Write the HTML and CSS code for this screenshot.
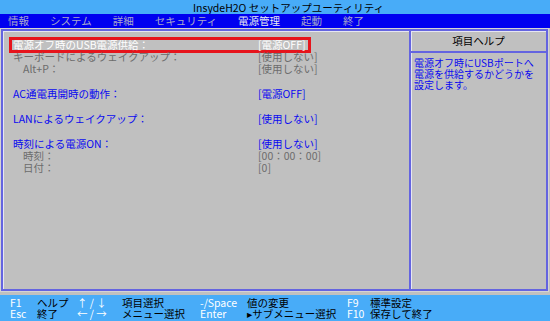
FILE: index.html
```html
<!DOCTYPE html>
<html lang="ja">
<head>
<meta charset="utf-8">
<link rel="stylesheet" href="styles.css">
</head>
<body>
<div class="screen">
  <div class="title">InsydeH2O セットアップユーティリティ</div>
  <div class="menu">
    <span class="mi">情報</span>
    <span class="mi">システム</span>
    <span class="mi">詳細</span>
    <span class="mi">セキュリティ</span>
    <span class="mi active">電源管理</span>
    <span class="mi">起動</span>
    <span class="mi">終了</span>
  </div>
  <div class="main">
    <div class="frame">
      <div class="items">
        <div class="row sel"><span class="lab">電源オフ時のUSB電源供給：</span><span class="val">[電源OFF]</span></div>
        <div class="row dim"><span class="lab">キーボードによるウェイクアップ：</span><span class="val">[使用しない]</span></div>
        <div class="row dim"><span class="lab sub">Alt+P：</span><span class="val">[使用しない]</span></div>
        <div class="row gap"></div>
        <div class="row act"><span class="lab">AC通電再開時の動作：</span><span class="val">[電源OFF]</span></div>
        <div class="row gap"></div>
        <div class="row act"><span class="lab">LANによるウェイクアップ：</span><span class="val">[使用しない]</span></div>
        <div class="row gap"></div>
        <div class="row act"><span class="lab">時刻による電源ON：</span><span class="val">[使用しない]</span></div>
        <div class="row dim"><span class="lab sub">時刻：</span><span class="val">[00：00：00]</span></div>
        <div class="row dim"><span class="lab sub">日付：</span><span class="val">[0]</span></div>
      </div>
      <div class="help">
        <div class="help-head">項目ヘルプ</div>
        <div class="help-body">電源オフ時にUSBポートへ<br>電源を供給するかどうかを<br>設定します。</div>
      </div>
    </div>
  </div>
  <div class="footer">
    <span class="k">F1</span><span class="d">ヘルプ</span><span class="k">↑ / ↓</span><span class="d">項目選択</span><span class="k">-/Space</span><span class="d">値の変更</span><span class="k">F9</span><span class="d">標準設定</span>
    <span class="k">Esc</span><span class="d">終了</span><span class="k">← / →</span><span class="d">メニュー選択</span><span class="k">Enter</span><span class="d">▸サブメニュー選択</span><span class="k">F10</span><span class="d">保存して終了</span>
  </div>
</div>
</body>
</html>
```
FILE: styles.css
```css
html, body {
  margin: 0;
  padding: 0;
  background: #c0c0c0;
}
.screen {
  width: 550px;
  height: 321px;
  display: flex;
  flex-direction: column;
  font-family: "Noto Sans CJK JP", "DejaVu Sans", sans-serif;
  font-size: 10.5px;
  overflow: hidden;
}
.title {
  height: 14px;
  line-height: 15px;
  background: #48acf8;
  color: #000;
  padding-left: 193px;
  white-space: nowrap;
}
.menu {
  height: 14px;
  line-height: 14px;
  background: #0000f0;
  display: flex;
  gap: 21px;
  padding-left: 8px;
  color: #a8a8c8;
  white-space: nowrap;
}
.mi.active {
  color: #e8e8f0;
}
.main {
  flex: 1;
  background: #c0c0c0;
  padding: 1px 2px 4px 1px;
  display: flex;
}
.frame {
  flex: 1;
  border: 2px solid #6464e0;
  box-shadow: inset 1px 1px 0 #e6e6f2, 0 0 0 1px #d4d4d4;
  display: grid;
  grid-template-columns: 1fr 137px;
}
.items {
  padding: 7.5px 0 0 8px;
}
.row {
  width: 294px;
  height: 12.4px;
  line-height: 12.4px;
  display: flex;
  padding: 0 2px;
  white-space: nowrap;
}
.lab {
  flex: 0 0 245px;
}
.lab.sub {
  padding-left: 10px;
  flex-basis: 235px;
}
.val {
  flex: none;
}
.sel {
  color: #ffffff;
  box-shadow: 0 0 0 2px #e6141c, inset 0 0 0 1px #e6141c;
}
.dim {
  color: #6c6c6c;
}
.act {
  color: #0a0af0;
}
.help {
  border-left: 2px solid #6464e0;
  box-shadow: inset 1px 0 0 #e6e6f2;
  display: flex;
  flex-direction: column;
}
.help-head {
  height: 20px;
  line-height: 20px;
  text-align: center;
  color: #000;
  border-bottom: 2px solid #6464e0;
}
.help-body {
  padding: 5px 0 0 3px;
  font-size: 10px;
  line-height: 10.8px;
  color: #0a0af0;
  white-space: nowrap;
}
.footer {
  height: 26px;
  background: #48acf8;
  display: grid;
  grid-template-columns: 27px 40px 45px 78px 47px 100px 23px 1fr;
  grid-auto-rows: 11px;
  line-height: 11px;
  padding: 2px 0 0 10px;
  box-sizing: border-box;
  white-space: nowrap;
}
.footer .k {
  color: #ffffff;
}
.footer .d {
  color: #000000;
}
```
